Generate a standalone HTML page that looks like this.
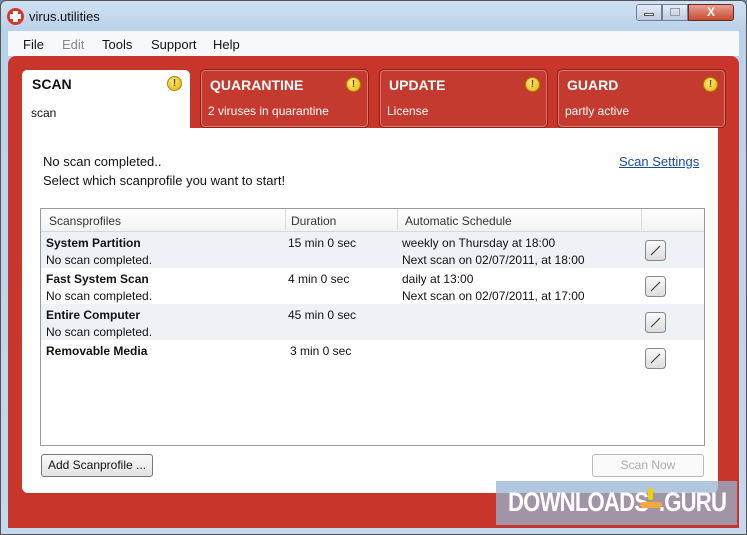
<!DOCTYPE html>
<html><head><meta charset="utf-8"><style>
*{margin:0;padding:0;box-sizing:border-box}
body{width:747px;height:535px;overflow:hidden;font-family:"Liberation Sans",sans-serif;font-size:12px;color:#111;background:#6b8bb0;position:relative}
.abs{position:absolute}
#frame{left:0;top:0;width:747px;height:535px;background:linear-gradient(#cfe1f3,#b9d1ea 30px,#c4d8ee);border:1px solid #555;border-radius:6px 6px 0 0}
#menu{left:8px;top:31px;width:731px;height:25px;background:#f6f8fb;font-size:13px}
#menu span{position:absolute;top:6px}
#red{left:8px;top:56px;width:731px;height:472px;background:#c8362b;border-radius:8px 8px 0 0}
#white{left:22px;top:128px;width:696px;height:365px;background:#fff;border-radius:0 0 6px 6px}
.tab{width:169px;height:59px;background:#c53a2e;border:1px solid #8d1f17;border-radius:5px;box-shadow:inset 0 0 0 1px #e0796f;color:#fff}
.tab b{position:absolute;left:9px;top:7px;font-size:14px}
.tab i{position:absolute;left:7px;top:34px;font-style:normal;font-size:12px}
.warn{position:absolute;width:15px;height:15px;border-radius:50%;background:radial-gradient(circle at 40% 35%,#ffe97a,#e3b300);border:1px solid #a98200;font-size:10px;font-weight:bold;color:#6a4a00;text-align:center;line-height:13px}
.row{position:absolute;left:1px;width:663px;height:36px}
.row div{position:absolute;font-size:12px}
</style></head><body>
<div id="frame" class="abs"></div>
<div class="abs" style="left:7px;top:8px;width:17px;height:17px;border-radius:50%;background:#d8382c"></div>
<div class="abs" style="left:13px;top:11px;width:5px;height:11px;background:#fff"></div>
<div class="abs" style="left:10px;top:14px;width:11px;height:5px;background:#fff"></div>
<div class="abs" style="left:29px;top:9px;font-size:13px">virus.utilities</div>
<div class="abs" style="left:636px;top:4px;width:26px;height:17px;border:1px solid #6f7f96;border-radius:3px 0 0 3px;background:linear-gradient(#e6eef8,#bccbde)"></div>
<div class="abs" style="left:644px;top:13px;width:10px;height:3px;background:#fff;border:1px solid #555"></div>
<div class="abs" style="left:662px;top:4px;width:26px;height:17px;border:1px solid #6f7f96;background:linear-gradient(#e6eef8,#bccbde)"></div>
<div class="abs" style="left:670px;top:8px;width:10px;height:8px;border:1px solid #999"></div>
<div class="abs" style="left:688px;top:4px;width:46px;height:17px;border:1px solid #6a2a22;border-radius:0 3px 3px 0;background:linear-gradient(#e8a08f,#c94a33);color:#fff;font-weight:bold;text-align:center;font-size:12px;line-height:15px">X</div>
<div id="menu" class="abs"><span style="left:15px">File</span><span style="left:54px;color:#888">Edit</span><span style="left:94px">Tools</span><span style="left:143px">Support</span><span style="left:205px">Help</span></div>
<div id="red" class="abs"></div>
<div class="abs" style="left:22px;top:70px;width:168px;height:70px;background:#fff;border-radius:5px 5px 0 0"></div>
<div class="abs" style="left:32px;top:76px;font-size:14px;font-weight:bold">SCAN</div>
<div class="abs" style="left:31px;top:106px">scan</div>
<div class="warn" style="left:167px;top:76px">!</div>
<div class="tab abs" style="left:200px;top:69px"><b>QUARANTINE</b><i>2 viruses in quarantine</i><span class="warn" style="left:145px;top:7px">!</span></div>
<div class="tab abs" style="left:379px;top:69px"><b>UPDATE</b><i>License</i><span class="warn" style="left:145px;top:7px">!</span></div>
<div class="tab abs" style="left:557px;top:69px"><b>GUARD</b><i>partly active</i><span class="warn" style="left:145px;top:7px">!</span></div>
<div id="white" class="abs"></div>
<div class="abs" style="left:22px;top:137px;width:696px;height:8px;background:#fff"></div>
<div class="abs" style="left:43px;top:154px;font-size:13px">No scan completed..</div>
<div class="abs" style="left:43px;top:173px;font-size:13px">Select which scanprofile you want to start!</div>
<div class="abs" style="left:619px;top:154px;color:#1a4a9a;text-decoration:underline;font-size:13px">Scan Settings</div>
<div class="abs" style="left:40px;top:208px;width:665px;height:238px;border:1px solid #999;background:#fff">
 <div class="abs" style="left:0;top:0;width:663px;height:23px;background:linear-gradient(#fff,#f1f3f5);border-bottom:1px solid #d5d8dc"></div>
 <div class="abs" style="left:244px;top:0;width:1px;height:23px;background:#dcdcdc"></div>
 <div class="abs" style="left:356px;top:0;width:1px;height:23px;background:#dcdcdc"></div>
 <div class="abs" style="left:600px;top:0;width:1px;height:23px;background:#dcdcdc"></div>
 <div class="abs" style="left:8px;top:5px;color:#333">Scansprofiles</div>
 <div class="abs" style="left:250px;top:5px;color:#333">Duration</div>
 <div class="abs" style="left:364px;top:5px;color:#333">Automatic Schedule</div>
 <div class="row" style="top:23px;background:#eef1f6;left:0"><div style="left:5px;top:4px;font-weight:bold">System Partition</div><div style="left:5px;top:21px">No scan completed.</div><div style="left:247px;top:4px">15 min 0 sec</div><div style="left:361px;top:4px">weekly on Thursday at 18:00</div><div style="left:361px;top:21px">Next scan on 02/07/2011, at 18:00</div></div>
 <div class="row" style="top:59px;left:0"><div style="left:5px;top:4px;font-weight:bold">Fast System Scan</div><div style="left:5px;top:21px">No scan completed.</div><div style="left:247px;top:4px">4 min 0 sec</div><div style="left:361px;top:4px">daily at 13:00</div><div style="left:361px;top:21px">Next scan on 02/07/2011, at 17:00</div></div>
 <div class="row" style="top:95px;background:#eef1f6;left:0"><div style="left:5px;top:4px;font-weight:bold">Entire Computer</div><div style="left:5px;top:21px">No scan completed.</div><div style="left:247px;top:4px">45 min 0 sec</div></div>
 <div class="row" style="top:131px;left:0"><div style="left:5px;top:4px;font-weight:bold">Removable Media</div><div style="left:249px;top:4px">3 min 0 sec</div></div>
</div>
<svg class="abs" style="left:644px;top:240px" width="24" height="130">
<defs><linearGradient id="g" x1="0" y1="0" x2="0" y2="1"><stop offset="0" stop-color="#fafafa"/><stop offset="1" stop-color="#dcdcdc"/></linearGradient></defs>
<g fill="url(#g)" stroke="#888"><rect x="1.5" y="0.5" width="20" height="20" rx="3"/><rect x="1.5" y="36.5" width="20" height="20" rx="3"/><rect x="1.5" y="72.5" width="20" height="20" rx="3"/><rect x="1.5" y="108.5" width="20" height="20" rx="3"/></g>
<g stroke="#444" stroke-width="1.2"><path d="M7 15L16 6"/><path d="M7 51L16 42"/><path d="M7 87L16 78"/><path d="M7 123L16 114"/></g>
</svg>
<div class="abs" style="left:41px;top:454px;width:112px;height:23px;border:1px solid #777;border-radius:3px;background:linear-gradient(#fbfbfb,#e2e2e2);text-align:center;line-height:21px">Add Scanprofile ...</div>
<div class="abs" style="left:592px;top:454px;width:112px;height:23px;border:1px solid #bbb;border-radius:3px;background:#fafafa;color:#aaa;text-align:center;line-height:21px">Scan Now</div>
<div class="abs" style="left:496px;top:481px;width:241px;height:44px;background:rgba(150,180,210,0.75)"></div>
<div class="abs" style="left:508px;top:487px;color:#fff;font-size:27px;font-weight:bold;letter-spacing:-1px;transform:scaleX(0.82);transform-origin:left">DOWNLOADS<span style="color:transparent">&nbsp;&nbsp;</span>.GURU</div>
<div class="abs" style="left:640px;top:502px;width:22px;height:6px;border-radius:3px;background:#f2a83a"></div>
<div class="abs" style="left:648px;top:488px;width:5px;height:12px;background:#f4d000;border-radius:2px"></div>
</body></html>
